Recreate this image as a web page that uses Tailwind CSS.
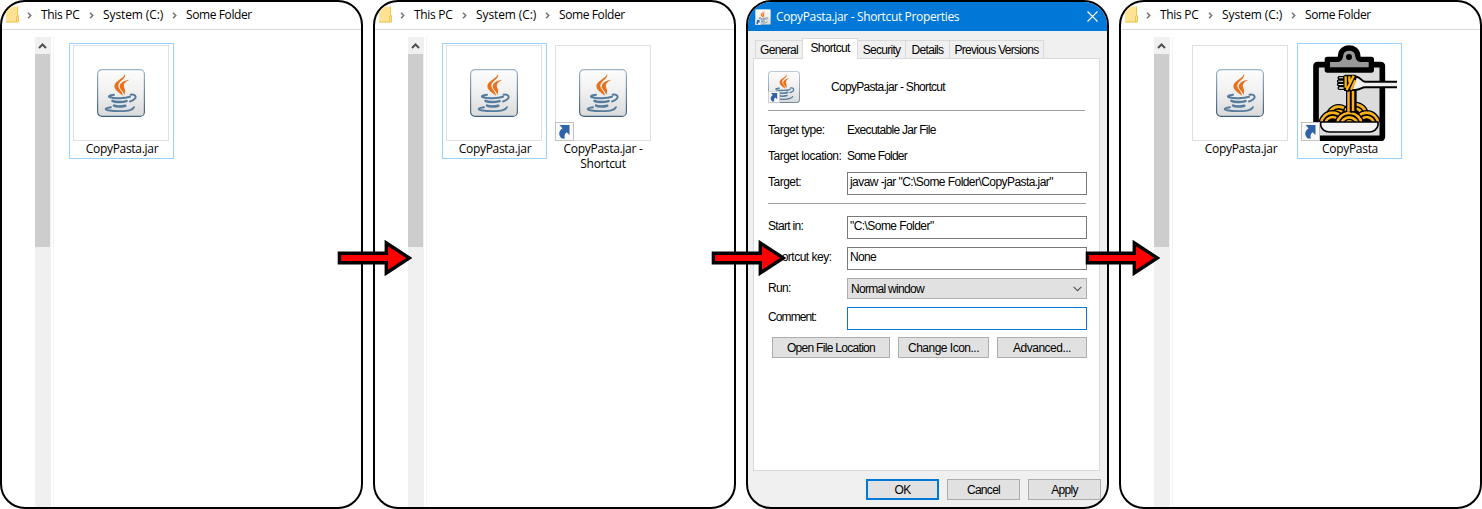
<!DOCTYPE html>
<html lang="en">
<head>
<meta charset="utf-8">
<title>CopyPasta shortcut steps</title>
<script src="https://cdn.jsdelivr.net/npm/@tailwindcss/browser@4"></script>
</head>
<body class="bg-white text-black overflow-hidden">
<svg width="0" height="0" class="absolute">
  <defs>
    <linearGradient id="tile" x1="0" y1="0" x2="0" y2="1"><stop offset="0" stop-color="#fdfdfd"/><stop offset=".45" stop-color="#f1f1f1"/><stop offset="1" stop-color="#dadada"/></linearGradient>
    <linearGradient id="tileEdge" x1="0" y1="0" x2="0" y2="1"><stop offset="0" stop-color="#9fb4c9"/><stop offset="1" stop-color="#3f5f7c"/></linearGradient>
    <symbol id="java" viewBox="0 0 48 48">
      <rect x=".6" y=".6" width="46.8" height="46.8" rx="4.5" fill="url(#tile)" stroke="url(#tileEdge)" stroke-width="1.2"/>
      <path d="M28 4.300C29.800 10 21.500 12 21.300 16.500C21.200 20 25.500 22 26 26.800C22 23.500 17.300 21 17.400 17C17.500 11.500 28 9.500 28 4.300Z" fill="#e8711c"/>
      <path d="M32.500 10.800C29 12.500 26.700 14.300 26.800 17C26.900 19.500 29.500 21 27.300 26C26.800 22.500 22.600 20.500 22.700 17.500C22.800 13.500 28 11.300 32.500 10.800Z" fill="#e8711c"/>
      <g fill="none" stroke="#557c9e" stroke-linecap="round">
        <path d="M17 25.800C12.500 26.200 10.500 27.500 13 28.300C18 29.700 28 29.400 33 27.800" stroke-width="2"/>
        <path d="M33.500 25.700C38.500 24.600 39.800 28.300 37.300 30.300C36 31.400 34.500 32.200 33 32.500" stroke-width="1.900"/>
        <path d="M15.500 31.900C18 33.500 25 33.400 29.500 32.100" stroke-width="2.500"/>
        <path d="M17 36.500C19 38 25 37.800 28.300 36.700" stroke-width="2.500"/>
        <path d="M14 38.200C8.500 38.900 7 40.400 11 41.200C18 42.600 29 42.400 33 41.100C35 40.500 36.500 39.500 37 38.200" stroke-width="1.900"/>
      </g>
    </symbol>
    <symbol id="link" viewBox="0 0 19 19">
      <rect x=".5" y=".5" width="18" height="18" fill="#f9f9f9" stroke="#c3c3c3"/>
      <path d="M4.500 3L14.500 3L14.500 13L11.700 10.200C9.600 12 9 13.700 10 16.500L6.800 16.500C3 13 3.600 9 7.600 6.200Z" fill="#2f62a6"/>
    </symbol>
    <symbol id="folder" viewBox="0 0 13 17">
      <path d="M0 .5H11.500Q12 .5 12 1V10H13V15.500L12.500 16.500H0Z" fill="#ffe393"/>
      <path d="M11.500 .5V9.500M10.500 16V10.500L12.500 9.500V16H0" fill="none" stroke="#e8c34f" stroke-width=".9"/>
    </symbol>
    <symbol id="chev" viewBox="0 0 5 7"><path d="M1 .8L3.700 3.500L1 6.200" fill="none" stroke="#777" stroke-width="1.600"/></symbol>
    <symbol id="arrow" viewBox="0 0 75 38">
      <path d="M2.400 14.200H49.300V4L72.300 19L49.300 34V23.800H2.400Z" fill="#f00" stroke="#000" stroke-width="3.400"/>
    </symbol>
    <clipPath id="aboveBowl"><path d="M60 180H300V262H60Z"/></clipPath>
    <symbol id="pasta" viewBox="33 30 288 288">
      <rect x="78" y="89" width="199" height="221" rx="4" fill="#dcdcdc" stroke="#000" stroke-width="17"/>
      <path d="M112 73H144C150 73 151 68 152 60C155 32 200 32 203 60C204 68 205 73 211 73H244V105H112Z" fill="#999" stroke="#000" stroke-width="16" stroke-linejoin="round"/>
      <circle cx="177" cy="66" r="9"/>
      <g clip-path="url(#aboveBowl)" stroke="#fbb117" stroke-width="8">
        <circle cx="196" cy="240" r="32"/><circle cx="196" cy="240" r="19"/>
        <circle cx="146" cy="246" r="31"/><circle cx="146" cy="246" r="18"/>
        <g stroke="#000" stroke-width="4" fill="none"><circle cx="196" cy="240" r="38"/><circle cx="146" cy="246" r="37"/></g>
        <circle cx="230" cy="268" r="35"/><circle cx="230" cy="268" r="22"/>
        <circle cx="128" cy="268" r="35"/><circle cx="128" cy="268" r="22"/>
        <g stroke="#000" stroke-width="4" fill="none"><circle cx="230" cy="268" r="41"/><circle cx="128" cy="268" r="41"/></g>
        <circle cx="178" cy="272" r="38"/><circle cx="178" cy="272" r="25"/><circle cx="178" cy="272" r="13"/>
        <circle cx="178" cy="272" r="44" stroke="#000" stroke-width="4" fill="none"/>
      </g>
      <path d="M92 261H264V270C263 283 250 291 238 291H118C106 291 93 283 92 270Z" fill="#f4f4f4" stroke="#000" stroke-width="5" stroke-linejoin="round"/>
      <path d="M168 165H200V226L185 234L168 228Z" fill="#000"/>
      <path d="M175.500 165V230M189 165V228" stroke="#fbb117" stroke-width="7.500"/>
      <path d="M330 140H225C215 140 212 127 200 125H165V165H195C212 165 214 157 225 157H330" fill="#f0f0f0" stroke="#000" stroke-width="6"/>
      <path d="M166 125H147Q142 128.500 147 132H166M166 135H145Q140 138.500 145 142H166M166 145H145Q140 148.500 145 152H166M166 155H147Q142 159 147 163H166" fill="#f0f0f0" stroke="#000" stroke-width="4"/>
      <path d="M159 124L166 119H196L201 126L186 168L170 171L161 164Z" fill="#000"/>
      <path d="M167 124V158M178 124V142M191 122L170 165M196 136L183 164" stroke="#fbb117" stroke-width="7"/>
    </symbol>
  </defs>
</svg>

<main class="flex w-[1482px] h-[509px] gap-2.5">

  <!-- Step 1: the jar in its folder -->
  <section class="relative w-[363px] h-full shrink-0">
    <div class="h-full flex flex-col border-2 border-black rounded-[25px] overflow-hidden bg-white font-['Open_Sans','Noto_Sans',sans-serif] text-[12px] leading-[15px]">
      <div class="h-7 shrink-0 border-b border-[#d9d9d9] flex items-start pl-1 pt-1">
        <svg class="w-[13px] h-[17px]"><use href="#folder"/></svg>
        <svg class="w-[5px] h-[7px] ml-2 mt-[6px]"><use href="#chev"/></svg>
        <span class="w-10 ml-[9px] mt-px whitespace-nowrap tracking-[-0.3px]">This PC</span>
        <svg class="w-[5px] h-[7px] ml-2 mt-[6px]"><use href="#chev"/></svg>
        <span class="w-[61px] ml-[9px] mt-px whitespace-nowrap tracking-[-0.1px]">System (C:)</span>
        <svg class="w-[5px] h-[7px] ml-2 mt-[6px]"><use href="#chev"/></svg>
        <span class="ml-[9px] mt-px whitespace-nowrap tracking-[-0.4px]">Some Folder</span>
      </div>
      <div class="flex grow pl-[33px] pt-[7px]">
        <div class="w-4 bg-[#f0f0f0]">
          <svg class="block w-[15px] h-[17px]" viewBox="0 0 15 17"><path d="M4 11L7.500 7.500L11 11" fill="none" stroke="#505050" stroke-width="2"/></svg>
          <div class="w-[15px] h-[193px] bg-[#cdcdcd]"></div>
        </div>
        <div class="grow ml-0.5 border-l border-[#f3f3f3] pl-[15px] pt-1.5 flex items-start gap-1">
          <figure class="w-[105px] h-[116px] border border-[#99d1ff] pl-[3px] pt-px">
            <div class="w-24 h-24 border border-[#e0e0e0] flex items-center justify-center"><svg class="w-12 h-12"><use href="#java"/></svg></div>
            <figcaption class="text-center w-[98px] tracking-[-0.3px]">CopyPasta.jar</figcaption>
          </figure>
        </div>
      </div>
    </div>
    <svg class="absolute z-10 left-[337px] top-[239px] w-[75px] h-[38px]"><use href="#arrow"/></svg>
  </section>

  <!-- Step 2: a shortcut next to the jar -->
  <section class="relative w-[363px] h-full shrink-0">
    <div class="h-full flex flex-col border-2 border-black rounded-[25px] overflow-hidden bg-white font-['Open_Sans','Noto_Sans',sans-serif] text-[12px] leading-[15px]">
      <div class="h-7 shrink-0 border-b border-[#d9d9d9] flex items-start pl-1 pt-1">
        <svg class="w-[13px] h-[17px]"><use href="#folder"/></svg>
        <svg class="w-[5px] h-[7px] ml-2 mt-[6px]"><use href="#chev"/></svg>
        <span class="w-10 ml-[9px] mt-px whitespace-nowrap tracking-[-0.3px]">This PC</span>
        <svg class="w-[5px] h-[7px] ml-2 mt-[6px]"><use href="#chev"/></svg>
        <span class="w-[61px] ml-[9px] mt-px whitespace-nowrap tracking-[-0.1px]">System (C:)</span>
        <svg class="w-[5px] h-[7px] ml-2 mt-[6px]"><use href="#chev"/></svg>
        <span class="ml-[9px] mt-px whitespace-nowrap tracking-[-0.4px]">Some Folder</span>
      </div>
      <div class="flex grow pl-[33px] pt-[7px]">
        <div class="w-4 bg-[#f0f0f0]">
          <svg class="block w-[15px] h-[17px]" viewBox="0 0 15 17"><path d="M4 11L7.500 7.500L11 11" fill="none" stroke="#505050" stroke-width="2"/></svg>
          <div class="w-[15px] h-[193px] bg-[#cdcdcd]"></div>
        </div>
        <div class="grow ml-0.5 border-l border-[#f3f3f3] pl-[15px] pt-1.5 flex items-start gap-1">
          <figure class="w-[105px] h-[116px] border border-[#99d1ff] pl-[3px] pt-px">
            <div class="w-24 h-24 border border-[#e0e0e0] flex items-center justify-center"><svg class="w-12 h-12"><use href="#java"/></svg></div>
            <figcaption class="text-center w-[98px] tracking-[-0.3px]">CopyPasta.jar</figcaption>
          </figure>
          <figure class="w-[105px] border border-transparent pl-[3px] pt-px">
            <div class="relative w-24 h-24 border border-[#e0e0e0] flex items-center justify-center"><svg class="w-12 h-12"><use href="#java"/></svg><svg class="absolute -left-px -bottom-px w-[19px] h-[19px]"><use href="#link"/></svg></div>
            <figcaption class="text-center w-[96px] tracking-[-0.3px]">CopyPasta.jar -<br>Shortcut</figcaption>
          </figure>
        </div>
      </div>
    </div>
    <svg class="absolute z-10 left-[338px] top-[239px] w-[75px] h-[38px]"><use href="#arrow"/></svg>
  </section>

  <!-- Step 3: shortcut properties -->
  <section class="relative w-[363px] h-full shrink-0">
    <div class="h-full flex flex-col border-2 border-black rounded-[25px] overflow-hidden bg-[#f0f0f0] font-['Liberation_Sans',Arial,sans-serif] text-[12px] leading-[14px] tracking-[-0.7px]">
      <div class="h-[29px] shrink-0 bg-[#0078d7] flex items-center pl-[7px] pr-[9px] text-white">
        <div class="relative w-4 h-4"><svg class="w-4 h-4"><use href="#java"/></svg><svg class="absolute left-0 bottom-0 w-1.5 h-1.5"><use href="#link"/></svg></div>
        <span class="ml-[5px] grow whitespace-nowrap font-['Open_Sans','Noto_Sans',sans-serif] text-[12px] tracking-[-0.35px]">CopyPasta.jar - Shortcut Properties</span>
        <svg class="w-[11px] h-[11px]" viewBox="0 0 11 11"><path d="M.5 .5L10.500 10.500M10.500 .5L.5 10.500" stroke="#fff" stroke-width="1.100"/></svg>
      </div>
      <div class="flex items-end h-7 shrink-0 pl-[7px] -mb-px relative whitespace-nowrap">
        <div class="w-[47px] h-[19px] border border-r-0 border-[#d9d9d9] text-center pt-[2px]">General</div>
        <div class="w-[56px] h-[21px] border border-b-0 border-[#d9d9d9] bg-white text-center pt-[2px]">Shortcut</div>
        <div class="w-[48px] h-[19px] border border-l-0 border-[#d9d9d9] text-center pt-[2px]">Security</div>
        <div class="w-[44px] h-[19px] border border-l-0 border-[#d9d9d9] text-center pt-[2px]">Details</div>
        <div class="w-[94px] h-[19px] border border-l-0 border-[#d9d9d9] text-center pt-[2px]">Previous Versions</div>
      </div>
      <div class="ml-[5px] w-[347px] h-[413px] shrink-0 border border-[#d9d9d9] bg-white pl-[14px] pt-3">
        <div class="flex items-center w-[317px] h-10 pb-[7px] border-b border-[#a0a0a0]">
          <div class="relative w-8 h-8"><svg class="w-8 h-8"><use href="#java"/></svg><svg class="absolute left-0 bottom-0 w-3 h-3"><use href="#link"/></svg></div>
          <span class="ml-[31px]">CopyPasta.jar - Shortcut</span>
        </div>
        <div class="flex mt-3"><span class="w-[79px] whitespace-nowrap tracking-[-0.5px]">Target type:</span><span>Executable Jar File</span></div>
        <div class="flex mt-3"><span class="w-[79px] whitespace-nowrap tracking-[-0.5px]">Target location:</span><span class="tracking-[-0.8px]">Some Folder</span></div>
        <div class="flex mt-[9px]"><span class="w-[79px] pt-[3px] tracking-[-0.5px]">Target:</span><div class="w-[240px] h-[23px] border border-[#7a7a7a] pl-0.5 pt-[2px] whitespace-nowrap tracking-[-0.56px]">javaw -jar "C:\Some Folder\CopyPasta.jar"</div></div>
        <div class="w-[318px] mt-2 border-t border-[#a0a0a0]"></div>
        <div class="flex mt-3"><span class="w-[79px] pt-[3px]">Start in:</span><div class="w-[240px] h-[23px] border border-[#7a7a7a] pl-0.5 pt-[2px] tracking-[-0.56px]">"C:\Some Folder"</div></div>
        <div class="flex mt-2"><span class="w-[79px] pt-[3px] whitespace-nowrap tracking-[-0.5px]">Shortcut key:</span><div class="w-[240px] h-[23px] border border-[#7a7a7a] pl-0.5 pt-[2px]">None</div></div>
        <div class="flex mt-2"><span class="w-[79px] pt-[3px]">Run:</span><div class="w-[240px] h-[21px] border border-[#adadad] bg-[#e1e1e1] pl-[3px] pr-1 flex items-center justify-between">Normal window<svg class="w-[9px] h-[6px]" viewBox="0 0 9 6"><path d="M.6 .8L4.500 4.700L8.400 .8" fill="none" stroke="#555" stroke-width="1.100"/></svg></div></div>
        <div class="flex mt-2"><span class="w-[79px] pt-[3px] tracking-[-0.9px]">Comment:</span><div class="w-[240px] h-[23px] border border-[#0078d7]"></div></div>
        <div class="flex gap-2 mt-[7px] pl-1">
          <div class="w-[118px] h-[21px] border border-[#adadad] bg-[#e1e1e1] flex items-center justify-center">Open File Location</div>
          <div class="w-[91px] h-[21px] border border-[#adadad] bg-[#e1e1e1] flex items-center justify-center tracking-[-0.5px]">Change Icon...</div>
          <div class="w-[90px] h-[21px] border border-[#adadad] bg-[#e1e1e1] flex items-center justify-center tracking-[-0.5px]">Advanced...</div>
        </div>
      </div>
      <div class="flex gap-2 mt-2 pl-[118px] shrink-0">
        <div class="w-[73px] h-[21px] border-2 border-[#0078d7] bg-[#e1e1e1] flex items-center justify-center shrink-0">OK</div>
        <div class="w-[73px] h-[21px] border border-[#adadad] bg-[#e1e1e1] flex items-center justify-center shrink-0">Cancel</div>
        <div class="w-[73px] h-[21px] border border-[#adadad] bg-[#e1e1e1] flex items-center justify-center shrink-0">Apply</div>
      </div>
    </div>
    <svg class="absolute z-10 left-[339px] top-[239px] w-[75px] h-[38px]"><use href="#arrow"/></svg>
  </section>

  <!-- Step 4: the finished shortcut -->
  <section class="relative w-[363px] h-full shrink-0">
    <div class="h-full flex flex-col border-2 border-black rounded-[25px] overflow-hidden bg-white font-['Open_Sans','Noto_Sans',sans-serif] text-[12px] leading-[15px]">
      <div class="h-7 shrink-0 border-b border-[#d9d9d9] flex items-start pl-1 pt-1">
        <svg class="w-[13px] h-[17px]"><use href="#folder"/></svg>
        <svg class="w-[5px] h-[7px] ml-2 mt-[6px]"><use href="#chev"/></svg>
        <span class="w-10 ml-[9px] mt-px whitespace-nowrap tracking-[-0.3px]">This PC</span>
        <svg class="w-[5px] h-[7px] ml-2 mt-[6px]"><use href="#chev"/></svg>
        <span class="w-[61px] ml-[9px] mt-px whitespace-nowrap tracking-[-0.1px]">System (C:)</span>
        <svg class="w-[5px] h-[7px] ml-2 mt-[6px]"><use href="#chev"/></svg>
        <span class="ml-[9px] mt-px whitespace-nowrap tracking-[-0.4px]">Some Folder</span>
      </div>
      <div class="flex grow pl-[33px] pt-[7px]">
        <div class="w-4 bg-[#f0f0f0]">
          <svg class="block w-[15px] h-[17px]" viewBox="0 0 15 17"><path d="M4 11L7.500 7.500L11 11" fill="none" stroke="#505050" stroke-width="2"/></svg>
          <div class="w-[15px] h-[193px] bg-[#cdcdcd]"></div>
        </div>
        <div class="grow ml-0.5 border-l border-[#f3f3f3] pl-[15px] pt-1.5 flex items-start gap-1">
          <figure class="w-[105px] h-[116px] border border-transparent pl-[3px] pt-px">
            <div class="w-24 h-24 border border-[#e0e0e0] flex items-center justify-center"><svg class="w-12 h-12"><use href="#java"/></svg></div>
            <figcaption class="text-center w-[98px] tracking-[-0.3px]">CopyPasta.jar</figcaption>
          </figure>
          <figure class="w-[105px] h-[116px] border border-[#99d1ff] pl-[3px] pt-px">
            <div class="relative w-24 h-24"><svg class="w-24 h-24"><use href="#pasta"/></svg><svg class="absolute left-0 bottom-0 w-[19px] h-[19px]"><use href="#link"/></svg></div>
            <figcaption class="text-center w-[98px] tracking-[-0.3px]">CopyPasta</figcaption>
          </figure>
        </div>
      </div>
    </div>
  </section>
</main>
</body>
</html>
